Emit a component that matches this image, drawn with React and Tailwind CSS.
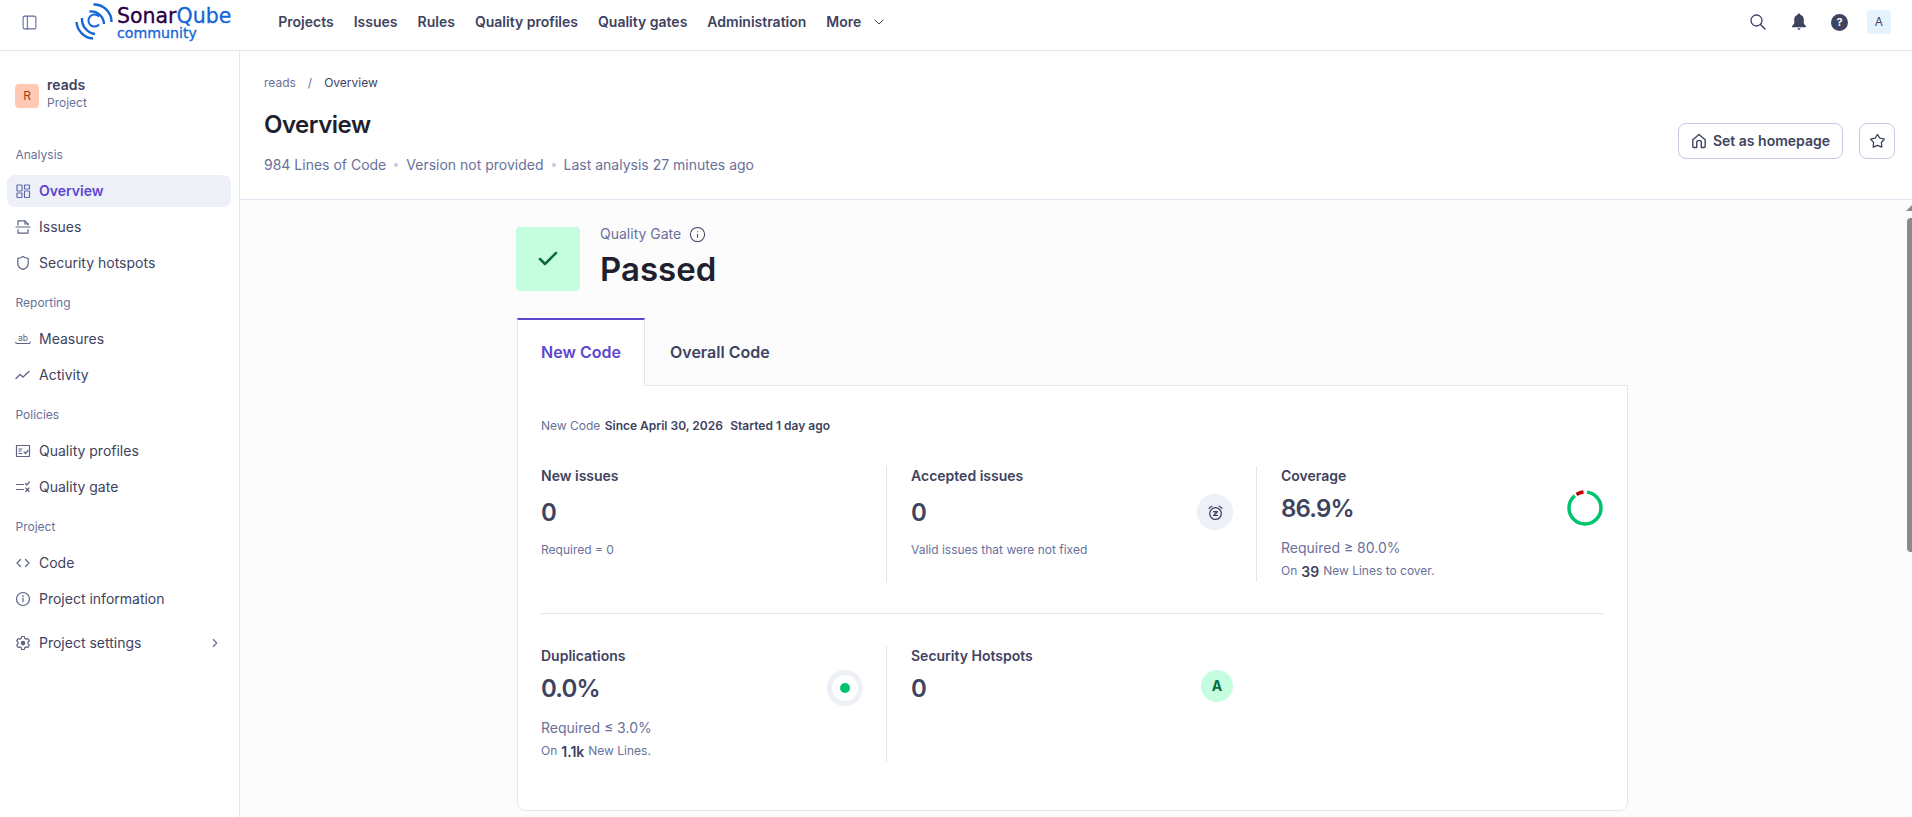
import React from "react";
import { Check, ChevronDown, ChevronRight, Info, PanelLeft } from "lucide-react";

const S = ({ children, size = 16, className = "" }) => (
  <svg width={size} height={size} viewBox="0 0 16 16" fill="none" stroke="currentColor" strokeWidth="1.2" strokeLinecap="round" strokeLinejoin="round" className={`shrink-0 ${className}`}>
    {children}
  </svg>
);

const icons = {
  overview: <S><rect x="2" y="2" width="5" height="6" rx=".5" /><rect x="9.500" y="2" width="5" height="4" rx=".5" /><rect x="2" y="10" width="5" height="4.500" rx=".5" /><rect x="9.500" y="8" width="5" height="6.500" rx=".5" /></S>,
  issues: <S><path d="M3 6V1.800h7l3 3V6" /><path d="M1 8h14" /><path d="M3 10.500v3.700h10v-3.700" /><path d="M10 2v3h3" /></S>,
  shield: <S><path d="M8 1.600c1.700 1.100 3.400 1.600 5.200 1.800v4.800c0 3.100-2.200 5.200-5.200 6.200-3-1-5.200-3.100-5.200-6.200V3.400C4.600 3.200 6.300 2.700 8 1.600z" /></S>,
  measures: <S><path d="M.8 11c0 1.200.4 1.500 1 1.500h12.400c.6 0 1-.3 1-1.500" /><text x="8" y="10" fontFamily="Inter, sans-serif" fontSize="8.500" textAnchor="middle" fill="currentColor" stroke="none">ab</text></S>,
  activity: <S><path d="M1 11.500l4-4 3 2.500 6-5.500" strokeWidth="1.300" /></S>,
  profiles: <S><rect x="1.500" y="2.500" width="13" height="11" rx=".4" /><path d="M4 6h3M4 8h2M4 10.500h3M9 9l1.500 1.500L13 7.500" /></S>,
  gate: <S><path d="M1.500 5.500h7M1.500 10.500h7M10.500 4.500l1.300 1.500 2.500-3M10.800 9l3.200 3.500M14 9l-3.200 3.500" /></S>,
  code: <S><path d="M5.500 4.500L2 8l3.500 3.500M10.500 4.500L14 8l-3.500 3.500" /></S>,
  info: <S><circle cx="8" cy="8" r="6.500" /><path d="M8 7.300v3.500" /><path d="M8 5v.3" strokeWidth="1.600" /></S>,
  gear: <S><path d="M6.600 1.500h2.800l.4 1.900 1.300.7 1.800-.6 1.400 2.400-1.400 1.300v1.600l1.400 1.300-1.400 2.400-1.800-.6-1.300.7-.4 1.900H6.600l-.4-1.900-1.300-.7-1.800.6-1.400-2.400 1.400-1.300V7.200L1.700 5.900l1.400-2.400 1.800.6 1.300-.7z" /><circle cx="8" cy="8.100" r="1.700" fill="currentColor" /></S>,
};

function NavItem({ icon, label, active, trailing, className = "" }) {
  return (
    <div className={`flex h-8 items-center rounded-lg pl-[8px] pr-[9px] ${active ? "bg-[#eef0f8] font-semibold text-[#5d46d0]" : "text-[#3e4360]"} ${className}`}>
      <span className={active ? "text-[#5d6aa8]" : "text-[#5d6486]"}>{icon}</span>
      <span className="ml-2 flex-1 text-sm leading-5">{label}</span>
      {trailing}
    </div>
  );
}

const Group = ({ children, className = "" }) => (
  <div className={`flex h-[24px] items-center pl-[8.500px] text-xs text-[#69719a] ${className}`}>{children}</div>
);

function Sidebar() {
  return (
    <aside className="flex w-[240px] shrink-0 flex-col border-r border-[#e1e6f3] bg-white">
      <div className="flex h-[90px] items-center pl-[15px]">
        <div className="flex h-6 w-6 items-center justify-center rounded bg-[#ffc9b3] text-xs text-[#a33c0a]">R</div>
        <div className="ml-2 -mt-[6px]">
          <div className="text-sm leading-[20px] font-semibold text-[#3e4360]">reads</div>
          <div className="text-xs leading-[16px] text-[#69719a]">Project</div>
        </div>
      </div>
      <div className="flex flex-col pl-[7px] pr-[8px]">
        <Group className="mt-[2px]">Analysis</Group>
        <div className="mt-[8px] flex flex-col gap-1">
          <NavItem icon={icons.overview} label="Overview" active />
          <NavItem icon={icons.issues} label="Issues" />
          <NavItem icon={icons.shield} label="Security hotspots" />
        </div>
        <Group className="mt-[12px]">Reporting</Group>
        <div className="mt-[8px] flex flex-col gap-1">
          <NavItem icon={icons.measures} label="Measures" />
          <NavItem icon={icons.activity} label="Activity" />
        </div>
        <Group className="mt-[12px]">Policies</Group>
        <div className="mt-[8px] flex flex-col gap-1">
          <NavItem icon={icons.profiles} label="Quality profiles" />
          <NavItem icon={icons.gate} label="Quality gate" />
        </div>
        <Group className="mt-[12px]">Project</Group>
        <div className="mt-[8px] flex flex-col gap-1">
          <NavItem icon={icons.code} label="Code" />
          <NavItem icon={icons.info} label="Project information" />
          <NavItem icon={icons.gear} label="Project settings" className="mt-2" trailing={<ChevronRight size={14} className="text-[#69719a]" />} />
        </div>
      </div>
    </aside>
  );
}

function Logo() {
  return (
    <div className="flex items-center">
      <svg width="38" height="38" viewBox="0 0 38 38" fill="none" stroke="#1565d8" strokeLinecap="butt" className="shrink-0">
        <path d="M18.500 1.500A17.500 17.500 0 0 1 36.500 19" strokeWidth="2.400" />
        <path d="M14.500 8.500A13 13 0 0 1 29 21" strokeWidth="2.400" />
        <path d="M24 13.700A6 6 0 1 0 24 21.500" strokeWidth="2" />
        <path d="M1.500 19A18 18 0 0 0 18 35.500" strokeWidth="2.400" />
        <path d="M7 15A15 15 0 0 0 20 31" strokeWidth="2.400" />
      </svg>
      <div className="ml-[4px] mt-[1px] flex flex-col font-['DejaVu_Sans',sans-serif] [-webkit-text-stroke:0.3px]">
        <div className="text-[20.500px] leading-[20px]"><span className="text-[#290042]">Sonar</span><span className="text-[#1565d8]">Qube</span></div>
        <div className="text-[14.200px] leading-[14px] text-[#1565d8]">community</div>
      </div>
    </div>
  );
}

function Header() {
  const items = ["Projects", "Issues", "Rules", "Quality profiles", "Quality gates", "Administration"];
  return (
    <header className="flex h-[51px] shrink-0 items-center border-b border-[#e1e6f3] bg-white pb-[6px]">
      <PanelLeft size={17} strokeWidth={1.500} className="ml-[21px] text-[#5d6aa0]" />
      <div className="ml-[37px]"><Logo /></div>
      <nav className="ml-[47px] flex items-center gap-5 text-sm font-semibold text-[#3e4360]">
        {items.map((i) => <span key={i}>{i}</span>)}
        <span className="flex items-center gap-2">More <ChevronDown size={16} strokeWidth={1.500} className="ml-[2px]" /></span>
      </nav>
      <div className="ml-auto mr-[21px] flex items-center text-[#3e4360]">
        <svg width="16" height="16" viewBox="0 0 16 16" fill="none" stroke="currentColor" strokeWidth="1.300" strokeLinecap="round" className="mr-[25px]"><circle cx="6.500" cy="6.500" r="5.500" /><path d="M10.500 10.500L15 15" strokeWidth="1.500" /></svg>
        <svg width="16" height="18" viewBox="0 0 16 18" fill="currentColor" className="mr-[24px]"><path d="M8 .6c.8 0 1.300.5 1.300 1.200 2.300.6 3.500 2.500 3.500 5v3.700L15 13.200v1H1v-1l2.200-2.700V6.800c0-2.500 1.200-4.400 3.500-5C6.700 1.100 7.200.6 8 .6z" /><path d="M6.500 15.200h3c0 .9-.6 1.500-1.500 1.500s-1.500-.6-1.500-1.500z" /></svg>
        <span className="mr-[19px] flex h-[17px] w-[17px] items-center justify-center rounded-full bg-[#3e4360] text-[11px] font-bold text-white">?</span>
        <div className="flex h-6 w-6 items-center justify-center rounded bg-[#e6f3fc] text-xs text-[#3e4360]">A</div>
      </div>
    </header>
  );
}

function PageHeader() {
  return (
    <div className="flex h-[149px] shrink-0 items-start border-b border-[#e1e6f3] bg-white pl-[24px] pr-[17px]">
      <div className="flex-1">
        <div className="mt-[24px] flex items-center text-xs leading-4 text-[#69719a]">
          <span>reads</span><span className="mx-3">/</span><span className="text-[#3e4360]">Overview</span>
        </div>
        <h1 className="mt-[19px] text-2xl leading-[30px] font-semibold tracking-[-0.500px] text-[#1f1f2e]">Overview</h1>
        <div className="mt-[15px] flex items-center text-sm leading-5 text-[#69719a]">
          <span>984 Lines of Code</span>
          <span className="mx-2 h-1 w-1 rounded-full bg-[#c5cbe0]" />
          <span>Version not provided</span>
          <span className="mx-2 h-1 w-1 rounded-full bg-[#c5cbe0]" />
          <span>Last analysis 27 minutes ago</span>
        </div>
      </div>
      <div className="mt-[72px] flex items-center gap-4">
        <button className="flex h-9 w-[165px] items-center justify-center gap-[6px] rounded-lg border border-[#c5cbe0] bg-white text-sm font-semibold text-[#3e4360]">
          <svg width="16" height="16" viewBox="0 0 16 16" fill="none" stroke="currentColor" strokeWidth="1.400" strokeLinecap="round" strokeLinejoin="round"><path d="M1.800 6.800L8 1.500l6.200 5.300v6.700a1 1 0 0 1-1 1H10.300V9.700a2.300 2.300 0 0 0-4.600 0v4.800H2.800a1 1 0 0 1-1-1z" /></svg>
          Set as homepage
        </button>
        <button className="flex h-9 w-9 items-center justify-center rounded-lg border border-[#c5cbe0] bg-white text-[#3e4360]">
          <svg width="17" height="17" viewBox="0 0 17 17" fill="none" stroke="currentColor" strokeWidth="1.300" strokeLinejoin="round"><path d="M8.500 1.500l2.400 3.600 4.500 1-3 3.400.4 4.700-4.300-1.800-4.300 1.800.4-4.700-3-3.400 4.500-1z" /></svg>
        </button>
      </div>
    </div>
  );
}

function Donut() {
  return (
    <svg width="36" height="36" viewBox="0 0 36 36" className="shrink-0" fill="none">
      <circle cx="18" cy="18" r="16" stroke="#00c46d" strokeWidth="3.500" strokeDasharray="87 14" strokeDashoffset="-2" transform="rotate(-90 18 18)" />
      <path d="M9.500 4.500 A 16 16 0 0 1 16.500 2.100" stroke="#bf0000" strokeWidth="3.500" />
    </svg>
  );
}

function DupDot() {
  return (
    <span className="flex h-9 w-9 shrink-0 items-center justify-center rounded-full border-[5px] border-[#eef0f8] bg-white">
      <span className="h-[10px] w-[10px] rounded-full bg-[#00c46d]" />
    </span>
  );
}

function Metric({ title, value, icon, sub, sub2, col, top = 4 }) {
  const tops = { 4: "mt-[4px]", 8: "mt-[8px]" };
  return (
    <div className={`h-[116px] ${col === 0 ? "pr-[23px]" : "border-l border-[#e1e6f3] pl-6 pr-[23px]"} ${col === 2 ? "!pr-0" : ""}`}>
      <div className="text-sm leading-5 font-semibold text-[#3e4360]">{title}</div>
      <div className={`${tops[top]} flex min-h-9 items-center justify-between`}>
        <div className="translate-y-[1px] text-2xl leading-9 font-semibold tracking-[-0.800px] text-[#3e4360]">{value}</div>
        {icon}
      </div>
      {sub}
      {sub2}
    </div>
  );
}

const Grey = ({ children }) => <div className="mt-3 text-xs leading-4 text-[#69719a]">{children}</div>;
const Req = ({ children }) => <div className="mt-3 text-sm leading-5 text-[#69719a]">{children}</div>;
const On = ({ n, post }) => (
  <div className="mt-[2px] flex items-baseline text-xs leading-5 text-[#69719a]">
    <span>On</span><span className="mx-1 translate-y-[2px] text-sm font-semibold text-[#3e4360]">{n}</span><span>{post}</span>
  </div>
);

function Card() {
  return (
    <div className="-mt-px rounded-b-lg border border-[#e1e6f3] bg-white pl-[23px] pr-6 pt-[32px] pb-[48px]">
      <div className="text-xs leading-4 text-[#69719a]">
        New Code <span className="ml-[1px] font-semibold text-[#3e4360]">Since April 30, 2026</span> <span className="ml-[4px] font-semibold text-[#3e4360]">Started 1 day ago</span>
      </div>
      <div className="mt-[32px] grid grid-cols-[345px_370px_1fr]">
        <Metric col={0} top={8} title="New issues" value="0" sub={<Grey>Required = 0</Grey>} />
        <Metric col={1} top={8} title="Accepted issues" value="0"
          icon={<span className="flex h-9 w-9 items-center justify-center rounded-full bg-[#eef0f8] text-[#3e4360]">
            <svg width="17" height="17" viewBox="0 0 16 16" fill="none" stroke="currentColor" strokeWidth="1.200" strokeLinecap="round" strokeLinejoin="round"><circle cx="8" cy="9" r="5.500" /><path d="M6.200 7.300h3.600l-3.600 3.500h3.600M2 4l2.500-2M14 4l-2.500-2" /></svg>
          </span>}
          sub={<Grey>Valid issues that were not fixed</Grey>} />
        <Metric col={2} title="Coverage" value="86.9%" icon={<Donut />} sub={<Req>Required ≥ 80.0%</Req>} sub2={<On n="39" post="New Lines to cover." />} />
      </div>
      <div className="mt-[31px] mb-[32px] h-px bg-[#e1e6f3]" />
      <div className="grid grid-cols-[345px_370px_1fr]">
        <Metric col={0} title="Duplications" value="0.0%" icon={<DupDot />} sub={<Req>Required ≤ 3.0%</Req>} sub2={<On n="1.1k" post="New Lines." />} />
        <Metric col={1} title="Security Hotspots" value="0"
          icon={<span className="-mt-[4px] flex h-8 w-8 items-center justify-center rounded-full bg-[#c4fde0] text-sm font-bold text-[#0a6b3c]">A</span>} />
      </div>
    </div>
  );
}

function Main() {
  return (
    <div className="relative flex-1 overflow-hidden bg-[#fcfcfd]">
      <div className="ml-[276px] mt-[27px] w-[1112px]">
        <div className="flex items-start">
          <div className="flex h-16 w-16 items-center justify-center rounded bg-[#c4fde0]">
            <Check size={24} strokeWidth={2.500} className="text-[#0a6b3c]" />
          </div>
          <div className="ml-5 -mt-[3px]">
            <div className="flex items-center gap-2 text-sm leading-5 text-[#69719a]">Quality Gate <Info size={17} strokeWidth={1.500} className="text-[#3e4360]" /></div>
            <div className="mt-[5px] text-[33px] leading-[40px] font-semibold text-[#1f1f2e]">Passed</div>
          </div>
        </div>
        <div className="ml-[1px] mt-[27px]">
          <div className="flex text-base font-semibold">
            <div className="z-10 flex h-[68px] w-[128px] items-center justify-center border-x border-t-2 border-x-[#e1e6f3] border-t-[#5d46d0] bg-white pb-[2px] text-[#5d46d0]">New Code</div>
            <div className="flex h-[68px] items-center px-[25px] text-[#3e4360]">Overall Code</div>
          </div>
          <Card />
        </div>
      </div>
      <svg width="6" height="6" viewBox="0 0 6 6" className="absolute top-[5px] right-0"><path d="M0 6L6 0V6z" fill="#8a8a8a" /></svg>
      <div className="absolute top-[18px] right-0 h-[334px] w-[5px] rounded-l-sm bg-[#8a8a8a]" />
    </div>
  );
}

export default function App() {
  return (
    <div className="flex h-[817px] w-full flex-col overflow-hidden bg-white font-['Inter',sans-serif]">
      <Header />
      <div className="flex min-h-0 flex-1">
        <Sidebar />
        <div className="flex min-w-0 flex-1 flex-col">
          <PageHeader />
          <Main />
        </div>
      </div>
    </div>
  );
}
